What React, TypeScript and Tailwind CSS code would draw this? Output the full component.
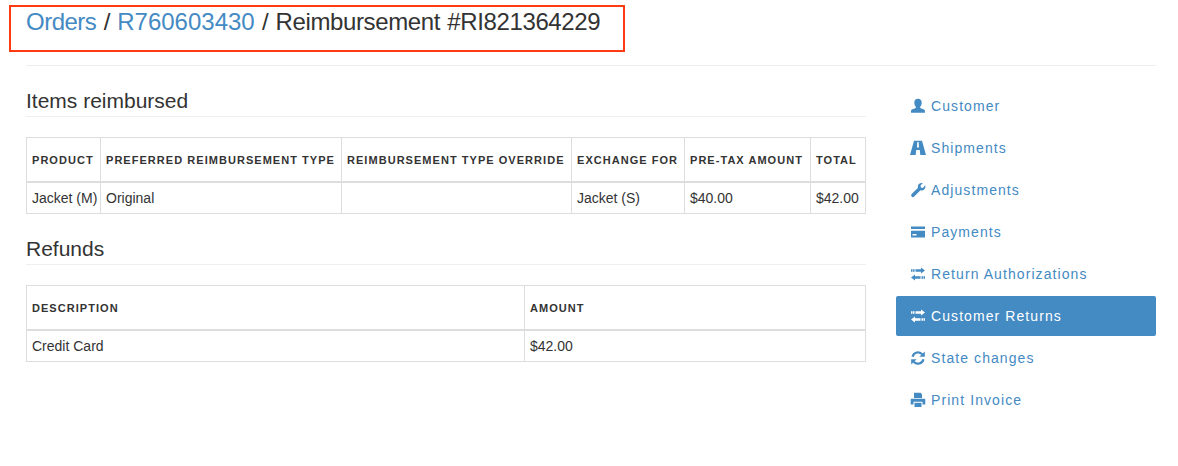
import { ReactNode } from 'react'

function UserIcon() {
  return (
    <svg className="w-[16px] h-[16px]" viewBox="0 0 16 16" fill="currentColor">
      <path d="M8 .8c2.300 0 3.700 1.500 3.700 3.900 0 1.600-.6 3.100-1.500 3.900v1.100c0 .6 3.300 1.100 4.300 2 .5.500.5 1.600.5 3H1c0-1.400 0-2.500.5-3 1-.9 4.300-1.400 4.300-2V8.600C4.900 7.800 4.300 6.300 4.300 4.700 4.300 2.300 5.700.8 8 .8z" />
    </svg>
  )
}

function RoadIcon() {
  return (
    <svg className="w-[16px] h-[16px]" viewBox="0 0 16 16" fill="currentColor">
      <path
        fillRule="evenodd"
        d="M4 .8h8L16 15h-5.700l-.5-5H6.200l-.5 5H0L4 .8zM7.300 2L7 7.500h2L8.700 2H7.300z"
      />
    </svg>
  )
}

function WrenchIcon() {
  return (
    <svg className="w-[16px] h-[16px]" viewBox="0 0 16 16" fill="currentColor">
      <path d="M15.200 3.300c.5 1.500.1 3.100-1 4.100-1 1-2.400 1.300-3.700.9L4.200 14.600c-.7.700-1.800.7-2.500 0s-.7-1.800 0-2.500L8 5.800c-.4-1.300-.1-2.700.9-3.700 1.100-1.100 2.600-1.400 4-1L10.500 3.500l.4 2 2 .4 2.300-2.600z" />
    </svg>
  )
}

function CardIcon() {
  return (
    <svg className="w-[16px] h-[16px]" viewBox="0 0 16 16" fill="currentColor">
      <path
        fillRule="evenodd"
        d="M1 2.500h14V5H1V2.500zM1 6.800h14v6.700H1V6.800zM2.500 10v1.500h4V10h-4z"
      />
    </svg>
  )
}

function TransferIcon() {
  return (
    <svg className="w-[16px] h-[16px]" viewBox="0 0 16 16" fill="currentColor">
      <path d="M11 1.500l4 3-4 3V5.800H5.500V3.200H11V1.500zM1 3.200h1.500v2.600H1V3.200zM3 3.200h1.500v2.600H3V3.200z" />
      <path d="M5 8.500v1.700h5.500v2.600H5v1.700l-4-3 4-3zM11.500 10.200H13v2.600h-1.500v-2.600zM13.500 10.200H15v2.600h-1.500v-2.600z" />
    </svg>
  )
}

function RefreshIcon() {
  return (
    <svg className="w-[16px] h-[16px]" viewBox="0 0 16 16" fill="none" stroke="currentColor" strokeWidth="2.200">
      <path d="M2.600 6.800A5.500 5.500 0 0 1 12.300 4.400" />
      <path d="M13.400 9.200A5.500 5.500 0 0 1 3.700 11.600" />
      <path d="M14.800 1.400v5.400H9.400z" fill="currentColor" stroke="none" />
      <path d="M1.200 14.600V9.200h5.400z" fill="currentColor" stroke="none" />
    </svg>
  )
}

function PrintIcon() {
  return (
    <svg className="w-[16px] h-[16px]" viewBox="0 0 16 16" fill="currentColor">
      <path d="M4 .8h6.500L12 2.300V6H4V.8z" />
      <path d="M1.500 6.800h13c.5 0 .8.300.8.800v5H12.500V9.800h-9v2.800H.7v-5c0-.5.300-.8.800-.8z" />
      <path d="M4.500 10.800h7V15h-7v-4.200z" />
    </svg>
  )
}

const navItems: { label: string; icon: ReactNode; active?: boolean }[] = [
  { label: 'Customer', icon: <UserIcon /> },
  { label: 'Shipments', icon: <RoadIcon /> },
  { label: 'Adjustments', icon: <WrenchIcon /> },
  { label: 'Payments', icon: <CardIcon /> },
  { label: 'Return Authorizations', icon: <TransferIcon /> },
  { label: 'Customer Returns', icon: <TransferIcon />, active: true },
  { label: 'State changes', icon: <RefreshIcon /> },
  { label: 'Print Invoice', icon: <PrintIcon /> },
]

function Th({ children }: { children?: ReactNode }) {
  return (
    <th className="border border-[#ddd] border-b-2 px-[5px] pt-[2px] text-left align-middle text-[11px] font-bold uppercase tracking-[1.04px] whitespace-nowrap">
      {children}
    </th>
  )
}

function Td({ children }: { children?: ReactNode }) {
  return <td className="border border-[#ddd] px-[5px] pt-[2px] text-[14px] whitespace-nowrap">{children}</td>
}

function SectionTitle({ children }: { children: ReactNode }) {
  return (
    <h2 className="h-[31px] border-b border-[#eee] pt-[3px] text-[21px] leading-[24px] text-[#333]">{children}</h2>
  )
}

export default function App() {
  return (
    <div className="relative h-[466px] w-[1178px] overflow-hidden bg-white pl-[26px] pr-[22px] text-[#333] [font-family:'Liberation_Sans',Arial,sans-serif]">
      {/* Annotation box */}
      <div className="absolute left-[9px] top-[5px] h-[47px] w-[616px] border-2 border-[#ff3b14]" />

      <header className="h-[66px] border-b border-[#eee] pt-[7px]">
        <h1 className="text-[24px] leading-[30px] tracking-[-0.38px] [word-spacing:1px]">
          <a className="tracking-[-0.5px] text-[#448ac3]">Orders</a> / <a className="tracking-normal text-[#448ac3]">R760603430</a> / Reimbursement #RI821364229
        </h1>
      </header>

      <div className="flex gap-[30px] pt-[20px]">
        <main className="w-[840px]">
          <SectionTitle>Items reimbursed</SectionTitle>
          <table className="mt-[20px] w-[839px] table-fixed border-collapse">
            <colgroup>
              <col className="w-[74px]" />
              <col className="w-[241px]" />
              <col className="w-[230px]" />
              <col className="w-[113px]" />
              <col className="w-[126px]" />
              <col className="w-[55px]" />
            </colgroup>
            <thead>
              <tr className="h-[44px]">
                <Th>Product</Th>
                <Th>Preferred Reimbursement Type</Th>
                <Th>Reimbursement Type Override</Th>
                <Th>Exchange For</Th>
                <Th>Pre-Tax Amount</Th>
                <Th>Total</Th>
              </tr>
            </thead>
            <tbody>
              <tr className="h-[32px]">
                <Td>Jacket (M)</Td>
                <Td>Original</Td>
                <Td />
                <Td>Jacket (S)</Td>
                <Td>$40.00</Td>
                <Td>$42.00</Td>
              </tr>
            </tbody>
          </table>

          <div className="mt-[20px]">
            <SectionTitle>Refunds</SectionTitle>
          </div>
          <table className="mt-[20px] w-[839px] table-fixed border-collapse">
            <colgroup>
              <col className="w-[498px]" />
              <col className="w-[341px]" />
            </colgroup>
            <thead>
              <tr className="h-[44px]">
                <Th>Description</Th>
                <Th>Amount</Th>
              </tr>
            </thead>
            <tbody>
              <tr className="h-[32px]">
                <Td>Credit Card</Td>
                <Td>$42.00</Td>
              </tr>
            </tbody>
          </table>
        </main>

        <nav className="flex w-[260px] flex-col gap-[2px]">
          {navItems.map((item) => (
            <a
              key={item.label}
              className={`flex h-[40px] items-center gap-[5px] rounded-[2px] pl-[14px] text-[14px] tracking-[1.08px] ${
                item.active ? 'bg-[#448ac3] text-white' : 'text-[#448ac3]'
              }`}
            >
              <span className="flex w-[16px] justify-center">{item.icon}</span>
              {item.label}
            </a>
          ))}
        </nav>
      </div>
    </div>
  )
}
